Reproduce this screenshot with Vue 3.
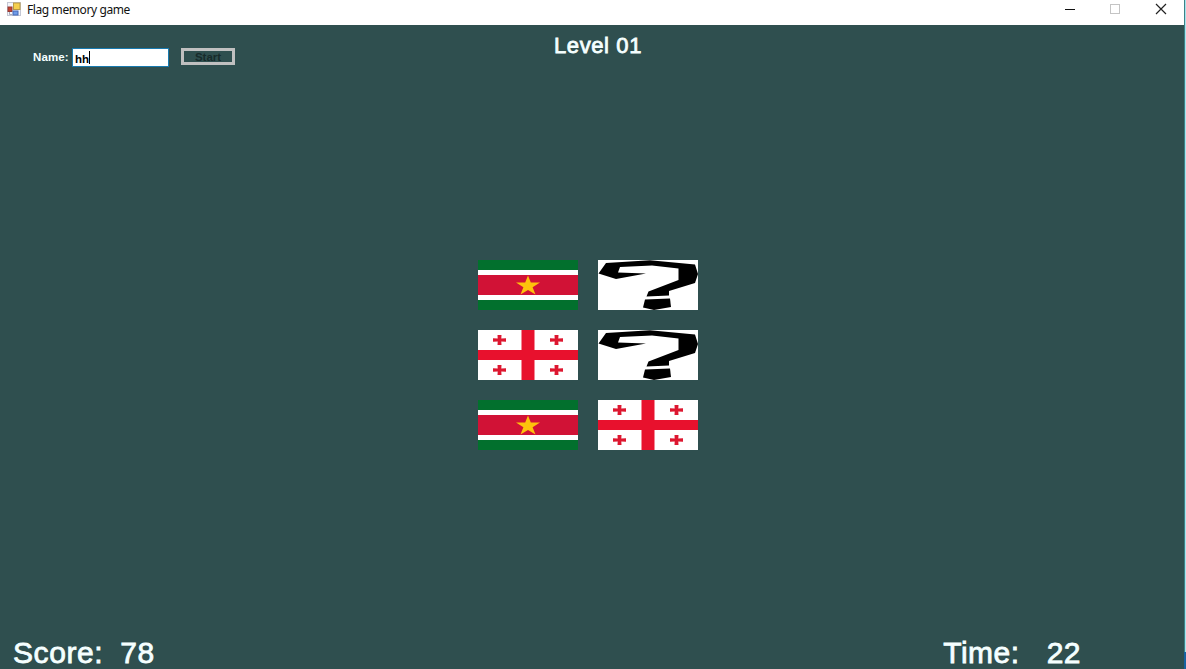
<script setup>
import { ref } from 'vue'

const name = ref('hh')
const cards = ['suriname', 'hidden', 'georgia', 'hidden', 'suriname', 'georgia']
const crosses = [[21.5, 10], [78.5, 10], [21.5, 40], [78.5, 40]]
</script>

<template>
  <div class="desktop">
    <div class="window">
      <header class="titlebar">
        <svg class="app-icon" width="14" height="14" viewBox="0 0 14 14">
          <rect x=".5" y=".5" width="13" height="13" fill="#f4f5fa" stroke="#c4c7d4" />
          <rect x="6.5" y="1" width="6.5" height="6.5" fill="#f5cf4e" stroke="#b99a45" />
          <rect x="1" y="5" width="4" height="4.5" fill="#c9442f" stroke="#963a35" />
          <rect x="6" y="9" width="5" height="4" fill="#6f9be8" stroke="#4568b5" />
          <path d="M2.5 10v2.5h3" fill="none" stroke="#a7aab8" />
        </svg>
        <span class="title">Flag memory game</span>
        <div class="controls">
          <svg width="12" height="12" viewBox="0 0 12 12"><path d="M2 6.500h10" stroke="#111" /></svg>
          <svg width="12" height="12" viewBox="0 0 12 12"><rect x="1.5" y="1.5" width="9" height="9" fill="none" stroke="#c4c4c4" /></svg>
          <svg width="12" height="12" viewBox="0 0 12 12"><path d="M1 1l10 10M11 1L1 11" stroke="#222" stroke-width="1.2" /></svg>
        </div>
      </header>

      <main class="game">
        <section class="top">
          <div class="player">
            <span class="label">Name:</span>
            <div class="field">{{ name }}<i class="caret"></i></div>
            <button class="start">Start</button>
          </div>
          <h1 class="level">Level 01</h1>
        </section>

        <section class="board">
          <svg v-for="(card, i) in cards" :key="i" width="100" height="50" viewBox="0 0 100 50">
            <template v-if="card === 'suriname'">
              <rect width="100" height="50" fill="#02702d" />
              <rect y="10" width="100" height="30" fill="#fff" />
              <rect y="15" width="100" height="20" fill="#d11236" />
              <path d="M50 15.5L52.8 22.5L62 22.5L54.6 27.2L57.5 34.5L50 30L42.5 34.5L45.4 27.2L38 22.5L47.2 22.5Z" fill="#fdc20c" />
            </template>
            <template v-else-if="card === 'georgia'">
              <rect width="100" height="50" fill="#fff" />
              <path d="M43.5 0h13v20H100v10H56.500v20h-13V30H0V20h43.500z" fill="#e8112d" />
              <path
                v-for="([x, y], n) in crosses"
                :key="n"
                :transform="`translate(${x} ${y})`"
                d="M-2-5h4L1.800-1.500L6.500-1.800v3.600L1.800 1.500L2 5h-4L-1.800 1.500L-6.500 1.800v-3.600L-1.800-1.500z"
                fill="#dd1730"
              />
            </template>
            <template v-else>
              <rect width="100" height="50" fill="#fff" />
              <path d="M8 3L52 .3L97 4.500L100 14L97 23L71 31V35.500L48.500 36.500L50.500 31.500L80.500 20V8.500L54 5.500L22 7L20 12.500L48 13.500L18 19L.5 13.500Z" fill="#000" />
              <path d="M47 39.500L72 38.500L73 47L56 50L45 47.500Z" fill="#000" />
            </template>
          </svg>
        </section>

        <footer class="status">
          <div class="score"><span>Score:</span><span>78</span></div>
          <div class="time"><span>Time:</span><span>22</span></div>
        </footer>
      </main>
    </div>
    <aside class="edge"></aside>
  </div>
</template>

<style>
html, body { margin: 0; overflow: hidden; }
</style>

<style scoped>
.desktop { display: flex; width: 1186px; height: 669px; overflow: hidden; font-family: "Liberation Sans", Arial, sans-serif; }
.window { display: flex; flex-direction: column; width: 1184px; height: 669px; }
.edge { width: 2px; background: linear-gradient(to right, #3d8186 1px, #a5e4ee 1px); border-bottom: 17px solid #1762a0; box-sizing: border-box; }
.titlebar { display: flex; align-items: flex-start; flex: 0 0 25px; background: #fff; }
.app-icon { margin: 2px 0 0 7px; }
.title { margin: 2px 0 0 6px; font: 12px/16px "Noto Sans", "Open Sans", sans-serif; letter-spacing: -.4px; color: #111; }
.controls { display: flex; gap: 34px; margin: 3px 17px 0 auto; }
.game { flex: 1; display: flex; flex-direction: column; background: #2f4f4f; color: #f5ffff; }
.top { display: grid; grid-template-columns: 554px 1fr; height: 235px; align-items: start; }
.player { display: flex; align-items: flex-start; padding: 23px 0 0 33px; font-size: 12px; font-weight: bold; }
.label { width: 39px; line-height: 18px; font-size: 11.500px; letter-spacing: .1px; }
.field { box-sizing: border-box; display: flex; align-items: center; width: 97px; height: 19px; padding: 2px 0 0 2px; border: 1px solid #187aaf; background: #fff; color: #000; font-size: 11.500px; }
.caret { width: 1px; height: 13px; margin-top: -2px; background: #000; }
.start { box-sizing: border-box; width: 54px; height: 17px; margin-left: 12px; padding: 1px 0 0; border: 3px solid #c0c0c0; background: #2f4f4f; color: #172b2b; font: bold 11.500px/11px "Liberation Sans", Arial, sans-serif; }
.level { margin: 8px 0 0; font-size: 22px; line-height: 26px; font-weight: normal; letter-spacing: .6px; -webkit-text-stroke: .8px currentColor; }
.board { display: grid; grid-template-columns: 100px 100px; gap: 20px; margin-left: 478px; }
.board svg { display: block; }
.status { display: flex; justify-content: space-between; margin-top: auto; padding: 0 103px 0 13px; height: 33px; font-size: 30px; line-height: 34px; -webkit-text-stroke: .8px currentColor; }
.score, .time { display: flex; white-space: nowrap; }
.score { gap: 17px; letter-spacing: .6px; }
.time { gap: 27px; letter-spacing: .5px; }
</style>
